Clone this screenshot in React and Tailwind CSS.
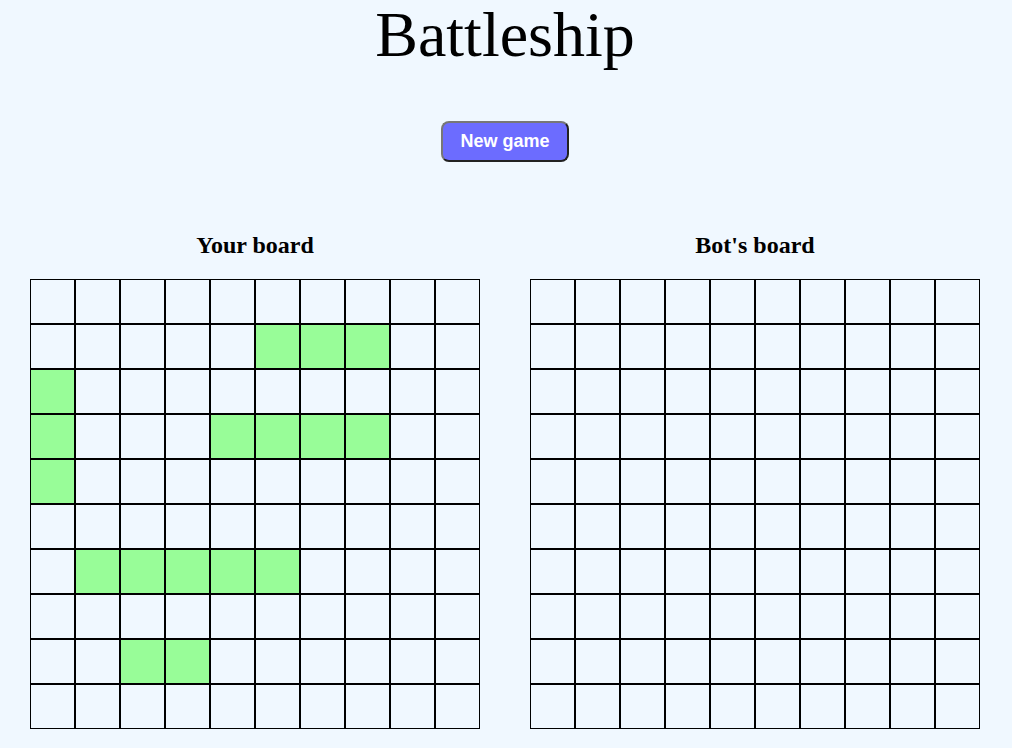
const ships = {
  '1-5': 1, '1-6': 1, '1-7': 1,
  '2-0': 1, '3-0': 1, '4-0': 1,
  '3-4': 1, '3-5': 1, '3-6': 1, '3-7': 1,
  '6-1': 1, '6-2': 1, '6-3': 1, '6-4': 1, '6-5': 1,
  '8-2': 1, '8-3': 1,
}

function Board({ title, showShips }) {
  const cells = []
  for (let r = 0; r < 10; r++) {
    for (let c = 0; c < 10; c++) {
      const ship = showShips && ships[`${r}-${c}`]
      cells.push(
        <div
          key={`${r}-${c}`}
          className={`w-[45px] h-[45px] border border-black ${ship ? 'bg-[#98fd98]' : ''}`}
        />
      )
    }
  }
  return (
    <div className="flex flex-col items-center">
      <h3 className="text-[24px] font-bold leading-[28px] mb-[20px]">{title}</h3>
      <div className="grid grid-cols-[repeat(10,45px)]">{cells}</div>
    </div>
  )
}

export default function App() {
  return (
    <div
      className="min-h-[749px] bg-[#f0f8ff] text-black"
      style={{ fontFamily: '"Liberation Serif", serif' }}
    >
      <div className="w-[1010px]">
        <h1 className="text-center text-[64px] leading-[71px] -mt-[1px]">Battleship</h1>
        <div className="flex justify-center mt-[51px]">
          <button
            className="w-[128px] h-[41px] rounded-[8px] border-2 border-t-[#777] border-l-[#777] border-b-[#222] border-r-[#222] bg-[#6c6cff] text-white font-bold text-[18px]"
            style={{ fontFamily: '"Liberation Sans", Arial, sans-serif' }}
          >
            New game
          </button>
        </div>
        <div className="flex justify-center gap-[50px] mt-[69px]">
          <Board title="Your board" showShips />
          <Board title="Bot's board" />
        </div>
      </div>
    </div>
  )
}
